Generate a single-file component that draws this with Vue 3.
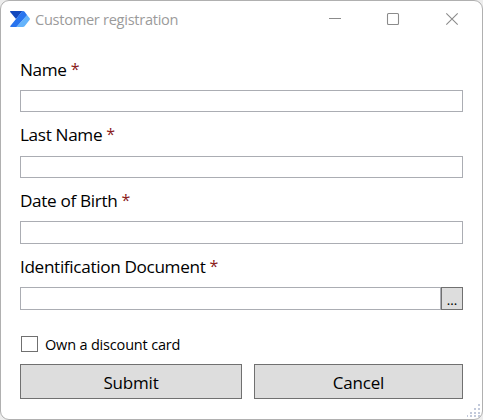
<script setup>
import { ref } from 'vue'

const fields = ref([
  { id: 'name', label: 'Name', value: '' },
  { id: 'last', label: 'Last Name', value: '' },
  { id: 'birth', label: 'Date of Birth', value: '' },
  { id: 'document', label: 'Identification Document', value: '', browse: true }
])
const discount = ref(false)
</script>

<template>
  <div class="window">
    <header class="titlebar">
      <svg class="logo" width="20" height="16" viewBox="0 0 20 16">
        <path d="M.5 0H12.5L6 8L.2 1Q-.2 .2 .5 0Z" fill="#1247bd" />
        <path d="M12.3 0H13Q14 0 14.6.8L17.2 4.2L6.5 16H.8Q-.2 15.8.3 15L6 8Z" fill="#2874ee" />
        <path d="M17 4L19.7 7.2Q20.2 8 19.7 8.8L14.6 15.2Q14 16 13 16H6.5Z" fill="#64b3fb" />
      </svg>
      <h1 class="title">Customer registration</h1>
      <div class="controls">
        <svg width="12" height="12" viewBox="0 0 12 12"><path d="M0 5.5H12" /></svg>
        <svg width="12" height="12" viewBox="0 0 12 12"><rect x=".5" y=".5" width="11" height="11" rx="1" /></svg>
        <svg class="close" width="12" height="12" viewBox="0 0 12 12"><path d="M.3.3L11.7 11.7M11.7.3L.3 11.7" /></svg>
      </div>
    </header>

    <form class="form" @submit.prevent>
      <div v-for="f in fields" :key="f.id" class="field" :class="f.id">
        <label class="label" :for="f.id"><span class="caption">{{ f.label }}</span><span class="star">*</span></label>
        <div class="entry">
          <input :id="f.id" v-model="f.value" class="input" type="text">
          <button v-if="f.browse" class="browse" type="button">...</button>
        </div>
      </div>
      <label class="check">
        <input v-model="discount" class="box" type="checkbox">
        <span class="check-text">Own a discount card</span>
      </label>
      <div class="actions">
        <button class="button" type="submit"><span class="submit-text">Submit</span></button>
        <button class="button" type="button"><span class="cancel-text">Cancel</span></button>
      </div>
    </form>

    <svg class="grip" width="14" height="14" viewBox="0 0 14 14">
      <path d="M11 0h2v2h-2zM7 4h2v2h-2zM11 4h2v2h-2zM7 8h2v2h-2zM3 8h2v2h-2zM11 8h2v2h-2zM-1 11h2v2h-2zM3 11h2v2h-2zM7 11h2v2h-2zM11 11h2v2h-2z" />
    </svg>
  </div>
</template>

<style>
body { background: #ededed; }
</style>

<style scoped>
.window {
  position: relative;
  box-sizing: border-box;
  width: 483px;
  height: 420px;
  border: 1px solid #b0b0b0;
  border-radius: 9px;
  background: #fff;
  color: #000;
  font-family: "Open Sans", "Noto Sans", sans-serif;
  overflow: hidden;
}
.titlebar {
  display: flex;
  height: 56px;
  box-sizing: border-box;
  padding: 10px 24px 0 9px;
}
.logo { flex: none; display: block; overflow: visible; }
.title {
  margin: -2px 0 0 5px;
  font-size: 14.6px;
  font-weight: 400;
  line-height: 20px;
  letter-spacing: -0.28px;
  color: #9b9b9b;
  white-space: nowrap;
}
.controls {
  display: flex;
  gap: 46px;
  margin: 2px 0 0 auto;
}
.controls svg { fill: none; stroke: #8b8b8b; stroke-width: 1.1; overflow: visible; }
.controls .close { margin-left: 1px; }
.form { padding: 0 19px; }
.field { height: 66px; }
.field.last { height: 65px; }
.label {
  display: flex;
  gap: 4px;
  height: 33px;
  font-size: 17.2px;
  line-height: 26px;
  white-space: nowrap;
}
.last .label { line-height: 24px; }
.caption { letter-spacing: -0.35px; }
.star { margin-top: -1px; color: #8b1a1a; font-size: 16px; }
.entry { display: flex; height: 22px; }
.birth .entry, .document .entry { height: 23px; }
.input {
  box-sizing: border-box;
  flex: 1;
  min-width: 0;
  height: 100%;
  margin: 0;
  padding: 0 4px;
  border: 1px solid #abadb3;
  border-radius: 0;
  background: #fff;
  font: inherit;
  font-size: 14px;
  outline: none;
}
.browse {
  box-sizing: border-box;
  width: 22px;
  height: 100%;
  padding: 3px 0 0;
  border: 1px solid #707070;
  background: #ddd;
  color: #000;
  font: 13px/16px "Noto Sans", sans-serif;
}
.check {
  display: flex;
  height: 17px;
  margin: 16px 0 11px 1px;
}
.box {
  appearance: none;
  box-sizing: border-box;
  width: 17px;
  height: 16px;
  margin: 0;
  border: 1px solid #707070;
  background: #fff;
}
.check-text {
  margin-left: 7px;
  font-size: 14.5px;
  line-height: 17px;
  letter-spacing: -0.18px;
  white-space: nowrap;
}
.actions {
  display: grid;
  grid-template-columns: 222px 209px;
  gap: 12px;
}
.button {
  height: 35px;
  padding: 0;
  border: 1px solid #707070;
  background: #ddd;
  color: #000;
  font: 17px/35px "Open Sans", "Noto Sans", sans-serif;
}
.submit-text, .cancel-text { letter-spacing: -0.2px; }
.grip {
  position: absolute;
  right: 1px;
  bottom: 1px;
  fill: #c3cadb;
}
</style>
